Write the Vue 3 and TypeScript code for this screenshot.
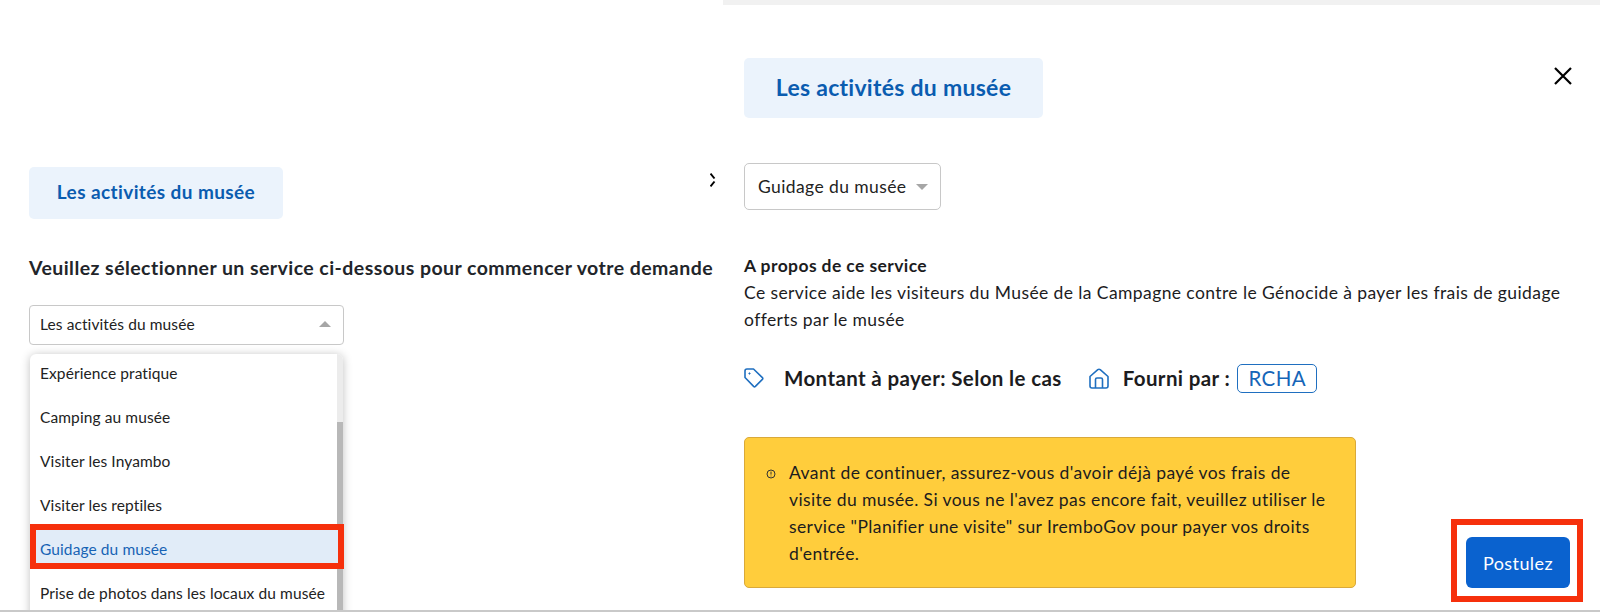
<script setup lang="ts">
const services: string[] = [
  'Expérience pratique',
  'Camping au musée',
  'Visiter les Inyambo',
  'Visiter les reptiles',
  'Guidage du musée',
  'Prise de photos dans les locaux du musée',
]
const selected = 'Guidage du musée'
</script>

<template>
  <div class="page">
    <section class="left">
      <div class="badge badge-small">Les activités du musée</div>
      <h2 class="prompt">Veuillez sélectionner un service ci-dessous pour commencer votre demande</h2>
      <div class="select select-open">
        <span>Les activités du musée</span>
        <span class="caret caret-up"></span>
      </div>
      <div class="menu">
        <div class="options">
          <div
            v-for="s in services"
            :key="s"
            class="option"
            :class="{ active: s === selected }"
          >{{ s }}</div>
        </div>
        <div class="scrollbar"><div class="thumb"></div></div>
      </div>
      <div class="clipped-close">
        <svg width="6" height="16" viewBox="0 0 6 16">
          <path d="M0.5 1.5 L4.5 6.5 M4.5 9.5 L0.5 14.5" stroke="#000" stroke-width="2" fill="none" />
        </svg>
      </div>
    </section>

    <section class="right">
      <div class="topbar"></div>
      <div class="right-body">
        <div class="title-row">
          <div class="badge badge-large">Les activités du musée</div>
          <svg class="close" width="20" height="20" viewBox="0 0 20 20">
            <path d="M2 2 L18 18 M18 2 L2 18" stroke="#000" stroke-width="2.2" fill="none" />
          </svg>
        </div>
        <div class="select select-compact">
          <span>Guidage du musée</span>
          <span class="caret caret-down"></span>
        </div>
        <div class="about">
          <div class="about-title">A propos de ce service</div>
          <p>Ce service aide les visiteurs du Musée de la Campagne contre le Génocide à payer les frais de guidage offerts par le musée</p>
        </div>
        <div class="facts">
          <svg class="tag" width="20" height="20" viewBox="0 0 20 20" fill="none" stroke="#1f6fc0" stroke-width="1.6" stroke-linejoin="round">
            <path d="M1 3 Q1 1 3 1 H9.5 L18.4 9.6 Q19.2 10.5 18.4 11.4 L11.4 18.4 Q10.5 19.2 9.6 18.4 L1 9.5 Z" />
            <circle cx="5.5" cy="5.5" r="0.7" fill="#1f6fc0" stroke-width="0.8" />
          </svg>
          <span class="fact-amount">Montant à payer: Selon le cas</span>
          <svg class="house" width="20" height="21" viewBox="0 0 20 21" fill="none" stroke="#1f6fc0" stroke-width="1.6" stroke-linejoin="round">
            <path d="M1 8.5 L8.8 1.6 Q10 0.8 11.2 1.6 L19 8.5 V18 Q19 20 17 20 H3 Q1 20 1 18 Z" />
            <path d="M6.5 20 V11.5 Q6.5 10 8 10 H12 Q13.5 10 13.5 11.5 V20" />
          </svg>
          <span class="fact-provider">Fourni par :</span>
          <span class="chip">RCHA</span>
        </div>
        <div class="bottom-row">
          <div class="alert">
            <svg class="alert-icon" width="10" height="10" viewBox="0 0 10 10" fill="none" stroke="#333" stroke-width="1">
              <circle cx="5" cy="5" r="4" />
              <path d="M5 2.6 V5.6 M5 6.6 V7.4" />
            </svg>
            <p>Avant de continuer, assurez-vous d'avoir déjà payé vos frais de visite&nbsp;du musée. Si vous ne l'avez pas encore fait, veuillez utiliser le service "Planifier une visite" sur IremboGov pour payer vos droits d'entrée.</p>
          </div>
          <div class="cta-frame">
            <button class="cta" type="button">Postulez</button>
          </div>
        </div>
      </div>
    </section>
  </div>
</template>

<style>
html, body { margin: 0; background: #fff; }
</style>

<style scoped>
.page {
  display: flex;
  width: 1600px;
  height: 612px;
  box-sizing: border-box;
  overflow: hidden;
  border-bottom: 2px solid #c9c9c9;
  background: #fff;
  font-family: "Lato", "Open Sans", sans-serif;
  color: #1c1c1e;
}
.left {
  position: relative;
  width: 723px;
  flex: none;
  box-sizing: border-box;
  padding: 167px 0 0 29px;
}
.badge {
  background: #ebf3fc;
  color: #0a5cb0;
  font-weight: 700;
  border-radius: 5px;
  display: flex;
  align-items: center;
  justify-content: center;
  box-sizing: border-box;
}
.badge-small { width: 254px; height: 52px; font-size: 19px; letter-spacing: 0.4px; padding-bottom: 3px; }
.badge-large { width: 299px; height: 60px; font-size: 23px; letter-spacing: 0.27px; padding-bottom: 2px; }
.prompt {
  margin: 36px 0 0;
  font-size: 19.5px;
  letter-spacing: 0.44px;
  line-height: 26px;
  font-weight: 700;
  white-space: nowrap;
  color: #22252a;
}
.select {
  display: flex;
  align-items: center;
  justify-content: space-between;
  box-sizing: border-box;
  background: #fff;
  border: 1px solid #c8c8c8;
  border-radius: 4px;
  color: #222;
}
.select-open {
  margin-top: 24px;
  width: 315px;
  height: 40px;
  padding: 0 12px 2px 10px;
  font-size: 15.5px;
  letter-spacing: 0.1px;
}
.caret { width: 0; height: 0; border-left: 6px solid transparent; border-right: 6px solid transparent; }
.caret-up { border-bottom: 6px solid #a6a6a6; }
.caret-down { border-top: 6px solid #a6a6a6; }
.menu {
  position: relative;
  display: flow-root;
  margin: 9px 0 0 1px;
  width: 313px;
  height: 280px;
  box-sizing: border-box;
  background: #fff;
  border-radius: 6px;
  box-shadow: 0 1px 10px rgba(0, 0, 0, 0.25);
}
.options { margin-top: -3px; }
.option {
  height: 44px;
  display: flex;
  align-items: center;
  box-sizing: border-box;
  padding-left: 10px;
  font-size: 15.5px;
  letter-spacing: 0.1px;
  color: #222;
  white-space: nowrap;
}
.option.active {
  position: relative;
  z-index: 2;
  width: 314px;
  height: 45px;
  margin: -3px 0 2px;
  padding: 5px 0 0 4px;
  background: #e1ecf8;
  color: #1763b5;
  border: 6px solid #f6300c;
}
.scrollbar {
  position: absolute;
  top: 0;
  right: 0;
  bottom: 0;
  width: 6px;
  border-radius: 0 6px 0 0;
  background: #ececec;
}
.thumb {
  position: absolute;
  top: 68px;
  left: 0;
  right: 0;
  bottom: 0;
  background: #b8b8b8;
}
.clipped-close {
  position: absolute;
  left: 710px;
  top: 172px;
  line-height: 0;
}
.right {
  flex: 1;
  min-width: 0;
  display: flex;
  flex-direction: column;
}
.topbar {
  height: 5px;
  background: #f1f1f1;
  flex: none;
}
.right-body {
  padding: 53px 0 0 21px;
}
.title-row {
  display: flex;
  align-items: flex-start;
  justify-content: space-between;
  padding-right: 27px;
}
.close { margin-top: 8px; }
.select-compact {
  margin-top: 45px;
  width: 197px;
  height: 47px;
  padding: 0 12px 0 13px;
  font-size: 17.5px;
  letter-spacing: 0.4px;
  border-radius: 5px;
}
.about {
  margin-top: 42px;
  width: 820px;
  font-size: 17.5px;
  letter-spacing: 0.4px;
  line-height: 27px;
  color: #1c1c1e;
}
.about-title { font-weight: 700; }
.about p { margin: 0; }
.facts {
  display: flex;
  align-items: center;
  margin-top: 29px;
  height: 32px;
  font-size: 20.5px;
  letter-spacing: 0.38px;
  font-weight: 700;
}
.tag { margin-right: 20px; }
.house { margin: 0 0 0 27px; }
.fact-provider { margin-left: 14px; }
.chip {
  margin-left: 7px;
  width: 80px;
  height: 29px;
  box-sizing: border-box;
  border: 1px solid #1f6fc0;
  border-radius: 5px;
  color: #1565b8;
  font-weight: 400;
  display: flex;
  align-items: center;
  justify-content: center;
}
.bottom-row {
  position: relative;
  margin-top: 43px;
}
.alert {
  width: 612px;
  height: 151px;
  box-sizing: border-box;
  background: #ffcd3c;
  border: 1px solid #d9a93a;
  border-radius: 5px;
  padding: 21px 26px 0 21px;
  display: flex;
  font-size: 17.5px;
  letter-spacing: 0.4px;
  line-height: 27px;
  color: #1c1c1e;
}
.alert-icon { flex: none; margin: 10px 13px 0 0; }
.alert p { margin: 0; }
.cta-frame {
  position: absolute;
  left: 707px;
  top: 82px;
  width: 132px;
  height: 83px;
  box-sizing: border-box;
  border: 6px solid #f6300c;
  padding: 4px 0 0 2px;
  display: flex;
  align-items: center;
  justify-content: center;
}
.cta {
  width: 104px;
  height: 51px;
  border: 0;
  border-radius: 6px;
  background: #0a62cf;
  color: #fff;
  font: 400 18px "Lato", "Open Sans", sans-serif;
  letter-spacing: 0.4px;
}
</style>
